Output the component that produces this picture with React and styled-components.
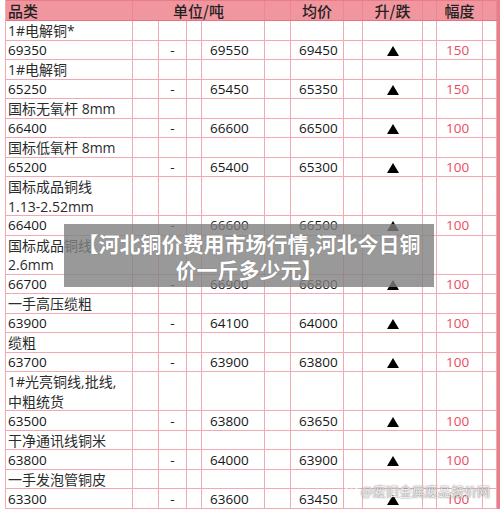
import React from "react";
import styled, { createGlobalStyle } from "styled-components";

const GlobalStyle = createGlobalStyle`
  html, body {
    margin: 0;
    padding: 0;
    background: #ffffff;
  }
  body {
    font-family: "Open Sans", "Noto Sans CJK SC", sans-serif;
    overflow: hidden;
  }
`;

const COLS = "127px 26px 28px 15px 63px 26px 53px 19px 60px 14px 46px 14px";
const LINE = "#f2a9b1";
const ROW_H = 19.52;

const Page = styled.div`
  position: relative;
  width: 500px;
  height: 511px;
  overflow: hidden;
  background: #fff;
`;

const Sheet = styled.div`
  margin-left: 5px;
  border-left: 1px solid ${LINE};
  border-right: 3px solid #e57f8b;
  display: flex;
  flex-direction: column;
`;

const HeaderRow = styled.div`
  display: grid;
  grid-template-columns: ${COLS};
  height: 21px;
  background: #f1969f;
  border-top: 1px solid #e77d89;
  border-bottom: 1px solid #e47482;
  box-sizing: border-box;
`;

const HeadCell = styled.div`
  grid-column: ${(p) => p.$span || "auto"};
  display: flex;
  align-items: center;
  justify-content: ${(p) => (p.$left ? "flex-start" : "center")};
  padding-left: ${(p) => (p.$left ? "2px" : "0")};
  border-right: 1px solid #ec8793;
  font-family: "Noto Sans CJK SC", sans-serif;
  font-size: 15px;
  font-weight: 500;
  color: #222;
  line-height: 1;
`;

const Row = styled.div`
  display: grid;
  grid-template-columns: ${COLS};
  height: ${(p) => p.$lines * ROW_H}px;
  box-sizing: border-box;
  border-bottom: 1px solid ${LINE};
`;

const Cell = styled.div`
  display: flex;
  align-items: center;
  justify-content: ${(p) =>
    p.$align === "center" ? "center" : "flex-start"};
  padding-left: ${(p) => p.$pad || 0}px;
  border-right: 1px solid ${LINE};
  font-size: 13.5px;
  color: ${(p) => (p.$red ? "#e94b5e" : "#161616")};
  white-space: nowrap;
`;

const NameCell = styled.div`
  display: flex;
  flex-direction: column;
  justify-content: space-around;
  padding-left: 2px;
  border-right: 1px solid ${LINE};
  font-size: 14px;
  color: #2b2b2b;
  white-space: nowrap;
`;

const NameLine = styled.span`
  height: ${ROW_H}px;
  line-height: ${ROW_H}px;
`;

const Up = styled.svg`
  width: 12px;
  height: 10px;
  margin-top: 2px;
`;

const Banner = styled.div`
  position: absolute;
  left: 64px;
  top: 224px;
  width: 370px;
  height: 63px;
  background: rgba(128, 128, 128, 0.8);
  display: flex;
  flex-direction: column;
  align-items: center;
  justify-content: center;
  color: #fff;
  font-family: "Noto Sans CJK SC", sans-serif;
  font-weight: 700;
  font-size: 21px;
  line-height: 26px;
  text-shadow: 0 0 1px rgba(0, 0, 0, 0.35);
  white-space: nowrap;
`;

const Watermark = styled.div`
  position: absolute;
  right: 10px;
  bottom: 11px;
  display: flex;
  align-items: center;
  gap: 3px;
  font-family: "Noto Sans CJK SC", sans-serif;
  font-size: 13px;
  color: rgba(255, 255, 255, 0.85);
  text-shadow: 0 0 1px rgba(90, 90, 90, 0.8), 0 0 2px rgba(90, 90, 90, 0.5);
`;

const data = [
  { name: ["1#电解铜*"], v: ["69350", "69550", "69450", "150"] },
  { name: ["1#电解铜"], v: ["65250", "65450", "65350", "150"] },
  { name: ["国标无氧杆 8mm"], v: ["66400", "66600", "66500", "100"] },
  { name: ["国标低氧杆 8mm"], v: ["65200", "65400", "65300", "100"] },
  { name: ["国标成品铜线", "1.13-2.52mm"], v: ["66400", "66600", "66500", "100"] },
  { name: ["国标成品铜线", "2.6mm"], v: ["66700", "66900", "66800", "100"] },
  { name: ["一手高压缆粗"], v: ["63900", "64100", "64000", "100"] },
  { name: ["缆粗"], v: ["63700", "63900", "63800", "100"] },
  { name: ["1#光亮铜线,批线,", "中粗统货"], v: ["63500", "63800", "63650", "100"] },
  { name: ["干净通讯线铜米"], v: ["63800", "64000", "63900", "100"] },
  { name: ["一手发泡管铜皮"], v: ["63300", "63600", "63450", "100"] },
];

const Blank = ({ n }) =>
  Array.from({ length: n }, (_, i) => <Cell key={i} />);

const Item = ({ item }) => (
  <>
    <Row $lines={item.name.length}>
      <NameCell>
        {item.name.map((t) => (
          <NameLine key={t}>{t}</NameLine>
        ))}
      </NameCell>
      <Blank n={11} />
    </Row>
    <Row $lines={1}>
      <Cell $pad={2}>{item.v[0]}</Cell>
      <Cell />
      <Cell $align="center">-</Cell>
      <Cell />
      <Cell $pad={8}>{item.v[1]}</Cell>
      <Cell />
      <Cell $pad={8}>{item.v[2]}</Cell>
      <Cell />
      <Cell $align="center">
        <Up viewBox="0 0 12 10">
          <polygon points="6,0 12,10 0,10" fill="#000" />
        </Up>
      </Cell>
      <Cell />
      <Cell $pad={9} $red>
        {item.v[3]}
      </Cell>
      <Cell />
    </Row>
  </>
);

export default function App() {
  return (
    <Page>
      <GlobalStyle />
      <Sheet>
        <HeaderRow>
          <HeadCell $left>品类</HeadCell>
          <HeadCell $span="span 4">单位/吨</HeadCell>
          <HeadCell />
          <HeadCell>均价</HeadCell>
          <HeadCell />
          <HeadCell>升/跌</HeadCell>
          <HeadCell />
          <HeadCell>幅度</HeadCell>
          <HeadCell />
        </HeaderRow>
        {data.map((item, i) => (
          <Item key={i} item={item} />
        ))}
      </Sheet>
      <Banner>
        <div>【河北铜价费用市场行情,河北今日铜</div>
        <div>价一斤多少元】</div>
      </Banner>
      <Watermark>
        <svg width="13" height="13" viewBox="0 0 13 13">
          <circle cx="6.5" cy="6.5" r="5.5" fill="none" stroke="rgba(255,255,255,0.9)" strokeWidth="1.5" />
          <circle cx="6.5" cy="6.5" r="2" fill="rgba(255,255,255,0.9)" />
        </svg>
        <span>@废旧金属废品报价网</span>
      </Watermark>
    </Page>
  );
}
